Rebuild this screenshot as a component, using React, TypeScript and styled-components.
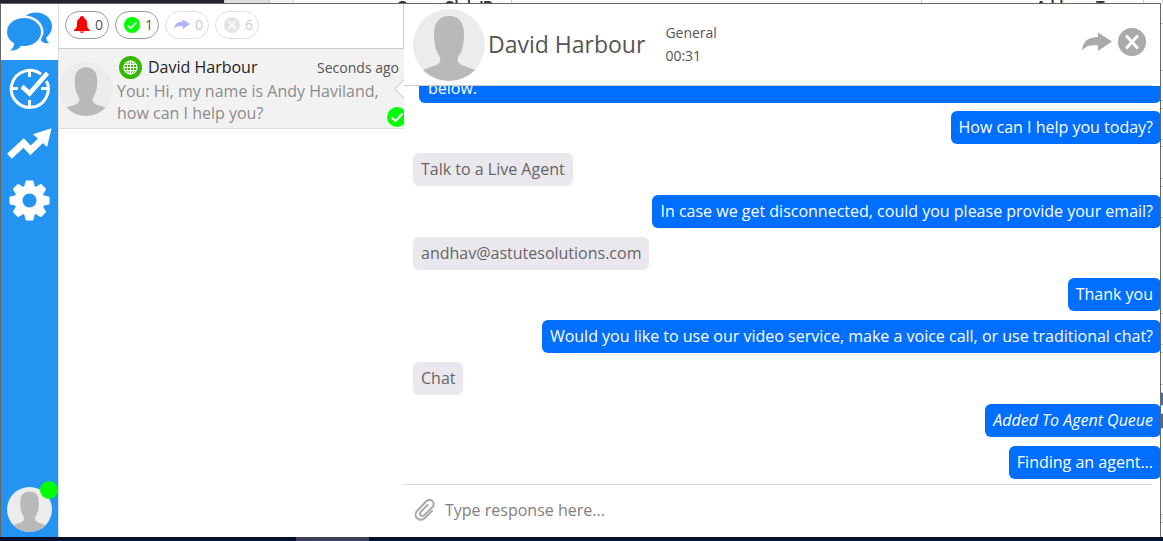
import React from "react";
import styled, { createGlobalStyle, css } from "styled-components";

const Global = createGlobalStyle`
  *, *::before, *::after { box-sizing: border-box; }
  body { margin: 0; background: #fff; font-family: "Open Sans", sans-serif; color: #555; }
  button, input { font: inherit; color: inherit; }
  button { padding: 0; border: 0; background: none; cursor: pointer; }
  ul { list-style: none; margin: 0; padding: 0; }
  svg { display: block; }
`;

const Desktop = styled.div`
  display: grid;
  grid-template: 3px minmax(0, 1fr) 4px / minmax(0, 1fr) 2px;
  height: 100vh;
  overflow: hidden;
`;

const PageTop = styled.div`
  grid-column: 1 / -1;
  display: flex;
  overflow: hidden;
  background: #fff;
`;

const TopCell = styled.div<{ $width?: number; $bg?: string; $indent?: number }>`
  flex: ${(p) => (p.$width ? `0 0 ${p.$width}px` : "1")};
  padding: 1px 0 0 ${(p) => p.$indent ?? 0}px;
  background: ${(p) => p.$bg ?? "#fff"};
  border-right: 1px solid #ccc;
  font-family: "Liberation Sans", sans-serif;
  font-weight: 700;
  font-size: 14px;
  line-height: 10px;
  color: #333;
`;

const PageEdge = styled.div`
  background: #fff;
  overflow: hidden;
`;

const EdgeCell = styled.div<{ $height: number; $bg?: string }>`
  height: ${(p) => p.$height}px;
  background: ${(p) => p.$bg ?? "#fff"};
  border-bottom: 1px solid #ccc;
`;

const Taskbar = styled.div`
  grid-column: 1 / -1;
  display: flex;
  padding-left: 296px;
  background: #03102e;
`;

const TaskItem = styled.span`
  width: 73px;
  background: #3a3f5a;
`;

const Window = styled.div`
  display: grid;
  grid-template-columns: 58px 345px minmax(0, 1fr);
  border: 1px solid #666;
  border-bottom: 0;
  background: #fff;
  min-height: 0;
`;

const Rail = styled.nav`
  display: flex;
  flex-direction: column;
  align-items: stretch;
  background: #2494f2;
  border-right: 1px solid #ddd;
`;

const RailButton = styled.button<{ $active?: boolean }>`
  display: grid;
  place-items: center;
  height: 56px;
  color: ${(p) => (p.$active ? "#2494f2" : "#fff")};
  background: ${(p) => (p.$active ? "#fff" : "transparent")};
`;

const Me = styled.button`
  position: relative;
  align-self: center;
  margin-top: auto;
  margin-bottom: 5px;
`;

const Presence = styled.span`
  position: absolute;
  top: -6px;
  right: -6px;
  width: 18px;
  height: 18px;
  border-radius: 50%;
  background: #0f0;
`;

const Inbox = styled.section`
  display: flex;
  flex-direction: column;
  min-width: 0;
`;

const Filters = styled.div`
  display: flex;
  align-items: center;
  gap: 6px;
  height: 45px;
  padding: 0 6px 3px;
  border-right: 1px solid #ccc;
  border-bottom: 1px solid #ccc;
`;

const Pill = styled.button<{ $faded?: boolean }>`
  display: flex;
  align-items: center;
  justify-content: flex-end;
  gap: 5px;
  width: 44px;
  height: 28px;
  padding-right: 5px;
  border: 1px solid #999;
  border-radius: 14px;
  font-size: 14px;
  opacity: ${(p) => (p.$faded ? 0.3 : 1)};
`;

const Conversation = styled.article`
  position: relative;
  display: grid;
  grid-template-columns: 55px minmax(0, 1fr);
  column-gap: 3px;
  height: 80px;
  border-bottom: 1px solid #ddd;
  background: #f2f2f2;
  overflow: hidden;
`;

const ConvAvatar = styled.div`
  align-self: center;
`;

const ConvTop = styled.header`
  display: flex;
  align-items: center;
  gap: 6px;
  height: 30px;
  padding: 6px 5px 0 2px;
`;

const ConvName = styled.span`
  flex: 1;
  font-size: 16px;
  line-height: 24px;
  color: #222;
`;

const ConvTime = styled.time`
  font-size: 14px;
`;

const Preview = styled.p`
  margin: 1px 0 0;
  font-size: 16px;
  line-height: 22px;
  color: #8c8c8c;
`;

const ConvStatus = styled.span`
  position: absolute;
  right: -3px;
  bottom: 1px;
`;

const Pointer = styled.span`
  position: absolute;
  right: -7px;
  top: 33px;
  width: 14px;
  height: 14px;
  transform: rotate(45deg);
  border: 1px solid #ccc;
  background: #fff;
`;

const Chat = styled.main`
  display: flex;
  flex-direction: column;
  min-width: 0;
  min-height: 0;
  overflow: hidden;
`;

const ChatHeader = styled.header`
  display: flex;
  align-items: center;
  flex: none;
  height: 82px;
  margin-right: 8px;
  padding-left: 9px;
  border-bottom: 1px solid #ccc;
`;

const Name = styled.h1`
  margin: 0 0 0 3px;
  padding-bottom: 2px;
  font-size: 23px;
  font-weight: 400;
  line-height: 32px;
`;

const Details = styled.div`
  flex: 1;
  margin-left: 20px;
  padding-bottom: 2px;
  font-size: 14px;
  line-height: 23px;
`;

const Actions = styled.div`
  display: flex;
  align-items: center;
  gap: 6px;
  margin-right: 6px;
  padding-bottom: 6px;
`;

const Messages = styled.ul`
  flex: 1;
  display: grid;
  grid-template-rows: 21px;
  grid-auto-rows: minmax(33px, 1fr);
  padding-bottom: 1px;
  min-height: 0;
  overflow: hidden;
`;

const Row = styled.li<{ $own?: boolean }>`
  display: flex;
  align-items: center;
  justify-content: ${(p) => (p.$own ? "flex-end" : "flex-start")};
  margin-right: -1px;
  padding-left: 9px;
  min-height: 0;
`;

const Bubble = styled.p<{ $own?: boolean; $italic?: boolean }>`
  margin: 0;
  padding: 4px 8px 5px;
  border-radius: 6px;
  font-size: 16px;
  line-height: 24px;
  font-style: ${(p) => (p.$italic ? "italic" : "normal")};
  ${(p) =>
    p.$own
      ? css`
          background: #006eff;
          color: #fff;
        `
      : css`
          background: #eae8ed;
          color: #666;
        `}
`;

const FirstRow = styled(Row)`
  align-items: flex-end;
  padding: 0 0 4px 15px;
`;

const FirstBubble = styled(Bubble)`
  flex: 1;
  padding: 4px 9px 3px;
`;

const Composer = styled.form`
  display: flex;
  align-items: center;
  flex: none;
  gap: 9px;
  height: 53px;
  margin-right: 8px;
  padding: 0 0 2px 10px;
  border-top: 1px solid #ddd;
`;

const Input = styled.input`
  flex: 1;
  min-width: 0;
  padding: 0;
  border: 0;
  outline: 0;
  font-size: 16px;
  &::placeholder { color: #808080; opacity: 1; }
`;

const Avatar = ({ size, id }: { size: number; id: string }) => (
  <svg width={size} height={size} viewBox="0 0 72 72" aria-hidden="true">
    <clipPath id={id}><circle cx="36" cy="36" r="36" /></clipPath>
    <g clipPath={`url(#${id})`}>
      <rect width="72" height="72" fill="#ececec" />
      <path d="M36 7C46 7 51 14 51 25C51 35 49 43 45 48C44 53 46 55 51 57C60 60 66 62 72 67V72H0V67C6 62 12 60 21 57C26 55 28 53 27 48C23 43 21 35 21 25C21 14 26 7 36 7Z" fill="#b9b9b9" />
    </g>
  </svg>
);

const Check = ({ size }: { size: number }) => (
  <svg width={size} height={size} viewBox="0 0 20 20" aria-hidden="true">
    <circle cx="10" cy="10" r="10" fill="#0f0" />
    <path d="M4.500 10.500L8.500 14L15.500 6.500" fill="none" stroke="#fff" strokeWidth="2" />
  </svg>
);

const Cross = ({ size }: { size: number }) => (
  <svg width={size} height={size} viewBox="0 0 28 28" aria-hidden="true">
    <circle cx="14" cy="14" r="14" fill="#aaa" />
    <path d="M8 7.500L20 20.500M20 7.500L8 20.500" stroke="#fff" strokeWidth="3" />
  </svg>
);

const Forward = ({ width, color }: { width: number; color: string }) => (
  <svg width={width} height={(width * 20) / 30} viewBox="0 0 30 20" aria-hidden="true">
    <path d="M0 18.500C1 8 8 5 16 5V.5L30 9.500L16 19V13.500C9 12.500 4 13.500 0 18.500Z" fill={color} />
  </svg>
);

const Bell = () => (
  <svg width="16" height="17" viewBox="0 0 16 17" aria-hidden="true">
    <path d="M8 0C9.400 0 10.200 .9 10 2C12.300 2.900 13 5 13 7.500C13 11 13.500 12.500 16 14V15H0V14C2.500 12.500 3 11 3 7.500C3 5 3.700 2.900 6 2C5.800 .9 6.600 0 8 0ZM5.500 15.500H10.500C10 17.300 6 17.300 5.500 15.500Z" fill="#f00" />
  </svg>
);

const Globe = () => (
  <svg width="23" height="23" viewBox="0 0 24 24" aria-hidden="true">
    <circle cx="12" cy="12" r="12" fill="#36b700" />
    <g fill="none" stroke="#fff" strokeWidth="1.200">
      <circle cx="12" cy="12" r="6.800" />
      <ellipse cx="12" cy="12" rx="3.300" ry="6.800" />
      <path d="M12 5V19M5.200 12H18.800M6.200 8.700H17.800M6.200 15.300H17.800" />
    </g>
  </svg>
);

const Bubbles = () => (
  <svg width="45" height="40" viewBox="0 0 45 40" aria-hidden="true" fill="currentColor">
    <ellipse cx="29" cy="14.500" rx="16" ry="14" />
    <path d="M40 22C38.500 26 39 29 42 31C38 32 35 30 32.500 27Z" />
    <ellipse cx="17" cy="20" rx="19.500" ry="16.500" fill="#fff" />
    <path d="M34 27C35.500 30 38 31.500 42 31C39.500 29.500 38.700 27 39.500 23L36 23Z" />
    <ellipse cx="17" cy="20" rx="17" ry="14" />
    <path d="M7 29C8 32 6.500 36 3 38.500C8 39 12 37 14.500 33Z" />
  </svg>
);

const ClockCheck = () => (
  <svg width="41" height="41" viewBox="0 0 41 41" aria-hidden="true" fill="none" stroke="#fff">
    <path d="M32 6.200A18.500 18.500 0 1 0 37.500 13" strokeWidth="3" />
    <path d="M20.500 3V9M20.500 32V38M3 20.500H9M32 20.500H38" strokeWidth="3" />
    <path d="M13 18.500L20.500 25.500L38.500 5" strokeWidth="4.500" />
  </svg>
);

const Trend = () => (
  <svg width="45" height="32" viewBox="0 0 46 32" aria-hidden="true">
    <path d="M2.500 28.500L17 15L24 22.500L37 10" fill="none" stroke="#fff" strokeWidth="7" />
    <path d="M45.500 0L26.500 6L41 19Z" fill="#fff" />
  </svg>
);

const Gear = () => (
  <svg width="41" height="41" viewBox="-20.500 -20.500 41 41" aria-hidden="true">
    <g fill="#fff">
      {[0, 45, 90, 135, 180, 225, 270, 315].map((a) => (
        <path key={a} transform={`rotate(${a})`} d="M-5.500 -13L-4 -19Q-3.800 -20 -3 -20H3Q3.800 -20 4 -19L5.500 -13Z" />
      ))}
    </g>
    <circle r="11" fill="none" stroke="#fff" strokeWidth="8" />
  </svg>
);

const Clip = () => (
  <svg width="22" height="24" viewBox="0 0 22 24" aria-hidden="true" fill="none" stroke="#aaa" strokeWidth="2" strokeLinecap="round">
    <path d="M18 13L11.500 19.500C5.500 25 -1.500 18.500 3 13L12 3.500C16.500 -.5 22 4.500 18.500 9L10.500 17C7.500 19.500 4.500 16.500 7 13.500L13.500 7" />
  </svg>
);

const messages: { text: string; own?: boolean; italic?: boolean }[] = [
  { text: "How can I help you today?", own: true },
  { text: "Talk to a Live Agent" },
  { text: "In case we get disconnected, could you please provide your email?", own: true },
  { text: "andhav@astutesolutions.com" },
  { text: "Thank you", own: true },
  { text: "Would you like to use our video service, make a voice call, or use traditional chat?", own: true },
  { text: "Chat" },
  { text: "Added To Agent Queue", own: true, italic: true },
  { text: "Finding an agent...", own: true },
];

const edgeCells: { height: number; bg?: string }[] = [
  { height: 21 }, { height: 47 }, { height: 30 }, { height: 8 }, { height: 31 },
  { height: 7 }, { height: 32 }, { height: 8 }, { height: 31 }, { height: 96 },
  { height: 31 }, { height: 8 }, { height: 32 }, { height: 8 },
  { height: 13, bg: "#4a6ea9" }, { height: 8 }, { height: 15, bg: "#4a6ea9" },
  { height: 86 }, { height: 8, bg: "#f2f2f2" },
];

export default function App() {
  return (
    <Desktop>
      <Global />
      <PageTop>
        <TopCell $width={225} $bg="#22252f" />
        <TopCell $width={45} $bg="#ddd" />
        <TopCell $width={24} $bg="#f2f2f2" />
        <TopCell $width={218} $indent={103}>Owner Club ID</TopCell>
        <TopCell $width={410} />
        <TopCell $width={222} $indent={114}>Address Type</TopCell>
        <TopCell />
      </PageTop>
      <Window>
        <Rail aria-label="Main">
          <RailButton $active aria-label="Chats"><Bubbles /></RailButton>
          <RailButton aria-label="Availability"><ClockCheck /></RailButton>
          <RailButton aria-label="Reports"><Trend /></RailButton>
          <RailButton aria-label="Settings"><Gear /></RailButton>
          <Me aria-label="My profile"><Avatar size={45} id="me" /><Presence /></Me>
        </Rail>
        <Inbox>
          <Filters>
            <Pill><Bell />0</Pill>
            <Pill><Check size={16} />1</Pill>
            <Pill $faded><Forward width={16} color="#00f" />0</Pill>
            <Pill $faded><Cross size={16} />6</Pill>
          </Filters>
          <Conversation>
            <ConvAvatar><Avatar size={54} id="conv" /></ConvAvatar>
            <div>
              <ConvTop>
                <Globe />
                <ConvName>David Harbour</ConvName>
                <ConvTime>Seconds ago</ConvTime>
              </ConvTop>
              <Preview>You: Hi, my name is Andy Haviland, how can I help you?</Preview>
            </div>
            <Pointer />
            <ConvStatus><Check size={20} /></ConvStatus>
          </Conversation>
        </Inbox>
        <Chat>
          <ChatHeader>
            <Avatar size={72} id="chat" />
            <Name>David Harbour</Name>
            <Details>
              <div>General</div>
              <div>00:31</div>
            </Details>
            <Actions>
              <button aria-label="Transfer"><Forward width={30} color="#aaa" /></button>
              <button aria-label="Close chat"><Cross size={28} /></button>
            </Actions>
          </ChatHeader>
          <Messages>
            <FirstRow $own><FirstBubble $own>below.</FirstBubble></FirstRow>
            {messages.map((m) => (
              <Row key={m.text} $own={m.own}>
                <Bubble $own={m.own} $italic={m.italic}>{m.text}</Bubble>
              </Row>
            ))}
          </Messages>
          <Composer>
            <button type="button" aria-label="Attach file"><Clip /></button>
            <Input aria-label="Response" placeholder="Type response here..." />
          </Composer>
        </Chat>
      </Window>
      <PageEdge>
        {edgeCells.map((cell, i) => (
          <EdgeCell key={i} $height={cell.height} $bg={cell.bg} />
        ))}
      </PageEdge>
      <Taskbar><TaskItem /></Taskbar>
    </Desktop>
  );
}
